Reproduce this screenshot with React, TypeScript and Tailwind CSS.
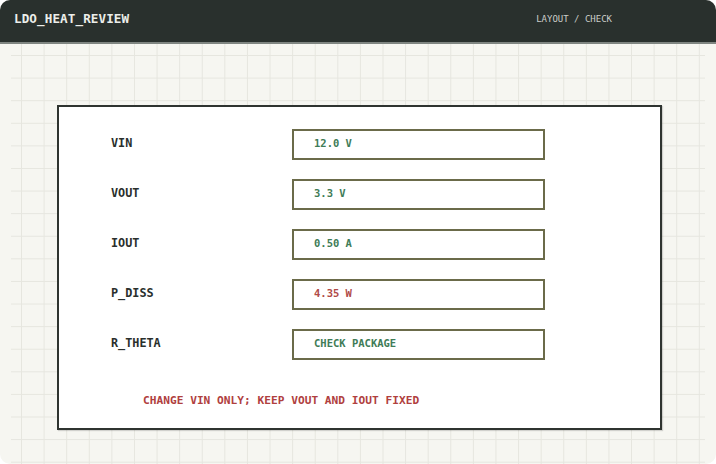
import React from "react";

type Row = { label: string; value: string; tone: "ok" | "warn" };

const rows: Row[] = [
  { label: "VIN", value: "12.0 V", tone: "ok" },
  { label: "VOUT", value: "3.3 V", tone: "ok" },
  { label: "IOUT", value: "0.50 A", tone: "ok" },
  { label: "P_DISS", value: "4.35 W", tone: "warn" },
  { label: "R_THETA", value: "CHECK PACKAGE", tone: "ok" },
];

const mono = { fontFamily: '"DejaVu Sans Mono", "Liberation Mono", monospace' };

export default function App() {
  return (
    <div className="bg-white w-[716px] h-[464px]" style={mono}>
      <div className="w-[716px] h-[464px] rounded-[10px] overflow-hidden flex flex-col bg-[#f6f6f1]">
        <header className="h-[44px] shrink-0 bg-[#29302d] border-b-2 border-[#7f8581] flex items-center pl-[14px]">
          <span className="text-[12.6px] font-bold text-[#eceeea] leading-none tracking-[0.1px] -mt-[4px]">
            LDO_HEAT_REVIEW
          </span>
          <span className="ml-auto mr-[104px] text-[9px] text-[#c9cdc9] leading-none -mt-[4px]">
            LAYOUT / CHECK
          </span>
        </header>
        <main className="flex-1 bg-[linear-gradient(to_right,#e6e6df_1px,transparent_1px)] bg-[length:22.6px_100%] bg-[position:21px_0]">
          <div className="mx-[11px] h-full bg-[linear-gradient(to_bottom,#e6e6df_1px,transparent_1px)] bg-[length:100%_22.6px] bg-[position:0_11px] pt-[61px] pl-[46px]">
            <section className="w-[605px] h-[325px] bg-white border-2 border-[#2f3430] shadow-[1px_1px_1px_rgba(0,0,0,0.15)] pt-[22px]">
              <div className="flex flex-col gap-[19px]">
                {rows.map((r) => (
                  <div key={r.label} className="flex items-start h-[31px]">
                    <div className="w-[233px] pl-[52px] pt-[8px] text-[11.8px] font-bold text-[#2a2f2c] leading-[13px]">
                      {r.label}
                    </div>
                    <div
                      className={
                        r.tone === "warn"
                          ? "w-[253px] h-[31px] border-2 border-[#6b6b4a] pl-[20px] pt-[6px] text-[10.5px] font-bold leading-[13px] text-[#b04a47]"
                          : "w-[253px] h-[31px] border-2 border-[#6b6b4a] pl-[20px] pt-[6px] text-[10.5px] font-bold leading-[13px] text-[#3f7c57]"
                      }
                    >
                      {r.value}
                    </div>
                  </div>
                ))}
              </div>
              <p className="mt-[34px] pl-[84px] text-[11.2px] font-bold text-[#b0403e] leading-[13px]">
                CHANGE VIN ONLY; KEEP VOUT AND IOUT FIXED
              </p>
            </section>
          </div>
        </main>
      </div>
    </div>
  );
}
